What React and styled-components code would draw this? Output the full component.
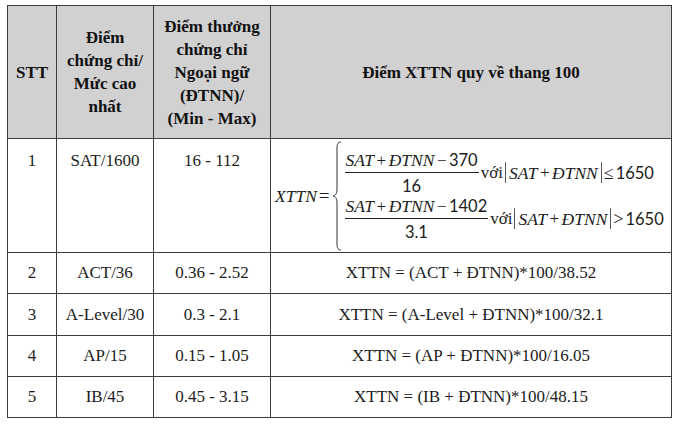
import React from "react";
import styled, { createGlobalStyle } from "styled-components";

const GlobalStyle = createGlobalStyle`
  html, body { margin: 0; padding: 0; background: #fff; }
  body { font-family: "Liberation Serif", "Times New Roman", serif; color: #1c1c1c; }
`;

const Page = styled.div`
  width: 680px;
  height: 424px;
  padding: 5px 0 0 7px;
  box-sizing: border-box;
  overflow: hidden;
`;

const Table = styled.table`
  border-collapse: collapse;
  table-layout: fixed;
  width: 664px;
  font-size: 17px;
`;

const HeadRow = styled.tr`
  height: 133px;
`;

const BodyRow = styled.tr`
  height: ${(p) => p.$h || 41}px;
`;

const HeadCell = styled.th`
  background: #d1d1d1;
  border: 1px solid #3c3c3c;
  font-weight: bold;
  line-height: 23px;
  padding: 0 4px;
  text-align: center;
  vertical-align: middle;
  color: #111;
`;

const Cell = styled.td`
  border: 1px solid #3c3c3c;
  padding: ${(p) => (p.$top ? "11px 4px 0" : "0 4px")};
  text-align: center;
  vertical-align: ${(p) => (p.$top ? "top" : "middle")};
  line-height: 22px;
`;

/* ---- formula ---- */
const Formula = styled.div`
  display: inline-flex;
  align-items: center;
  font-size: 17.5px;
  line-height: 20px;
  white-space: nowrap;
  margin-right: 6px;
`;

const Var = styled.span`
  font-style: italic;
`;

const Num = styled.span`
  font-family: Lato, "Open Sans", sans-serif;
  font-size: 16.5px;
`;

const Op = styled.span`
  margin: 0 ${(p) => p.$gap || 2.5}px;
  font-size: ${(p) => p.$size || 17}px;
`;

const Cases = styled.div`
  display: flex;
  flex-direction: column;
  margin-left: 3px;
`;

const CaseLine = styled.div`
  display: flex;
  align-items: center;
`;

const Frac = styled.span`
  display: inline-flex;
  flex-direction: column;
  align-items: center;
`;

const Numer = styled.span`
  border-bottom: 1px solid #222;
  padding: 0 1px 1px;
`;

const Denom = styled.span`
  padding-top: 3px;
`;

const Word = styled.span`
  margin: 0 2px;
  font-size: 17px;
`;

const Bar = styled.span`
  display: inline-block;
  width: 0;
  height: 21px;
  border-left: 1px solid #555;
  margin: ${(p) => (p.$right ? "0 0 0 3px" : "0 3px 0 0")};
  border-radius: 3px;
`;

const Brace = () => (
  <svg width="10" height="110" viewBox="0 0 10 110">
    <path
      d="M9 1 C5 1 5 4 5 10 L5 48 C5 53 3 55 1 55 C3 55 5 57 5 62 L5 100 C5 106 5 109 9 109"
      fill="none"
      stroke="#333"
      strokeWidth="1"
    />
  </svg>
);

const SatSum = () => (
  <>
    <Var>SAT</Var>
    <Op>+</Op>
    <Var>ĐTNN</Var>
  </>
);

const Case = ({ minus, den, rel }) => (
  <CaseLine>
    <Frac>
      <Numer>
        <SatSum />
        <Op>−</Op>
        <Num>{minus}</Num>
      </Numer>
      <Denom>
        <Num>{den}</Num>
      </Denom>
    </Frac>
    <Word>với</Word>
    <Bar />
    <SatSum />
    <Bar $right />
    <Op $gap={2} $size={18}>{rel}</Op>
    <Num>1650</Num>
  </CaseLine>
);

const SatFormula = () => (
  <Formula>
    <Var>XTTN</Var>
    <Op $gap={2} $size={19}>=</Op>
    <Brace />
    <Cases>
      <Case minus="370" den="16" rel="≤" />
      <Case minus="1402" den="3.1" rel=">" />
    </Cases>
  </Formula>
);

const rows = [
  { stt: 2, cert: "ACT/36", bonus: "0.36 - 2.52", formula: "XTTN = (ACT + ĐTNN)*100/38.52", h: 41 },
  { stt: 3, cert: "A-Level/30", bonus: "0.3 - 2.1", formula: "XTTN = (A-Level + ĐTNN)*100/32.1", h: 42 },
  { stt: 4, cert: "AP/15", bonus: "0.15 - 1.05", formula: "XTTN = (AP + ĐTNN)*100/16.05", h: 41 },
  { stt: 5, cert: "IB/45", bonus: "0.45 - 3.15", formula: "XTTN = (IB + ĐTNN)*100/48.15", h: 41 },
];

export default function App() {
  return (
    <Page>
      <GlobalStyle />
      <Table>
        <colgroup>
          <col style={{ width: 49 }} />
          <col style={{ width: 97 }} />
          <col style={{ width: 117 }} />
          <col style={{ width: 401 }} />
        </colgroup>
        <thead>
          <HeadRow>
            <HeadCell>STT</HeadCell>
            <HeadCell>
              Điểm
              <br />
              chứng chỉ/
              <br />
              Mức cao
              <br />
              nhất
            </HeadCell>
            <HeadCell>
              Điểm thưởng
              <br />
              chứng chỉ
              <br />
              Ngoại ngữ
              <br />
              (ĐTNN)/
              <br />
              (Min - Max)
            </HeadCell>
            <HeadCell>Điểm XTTN quy về thang 100</HeadCell>
          </HeadRow>
        </thead>
        <tbody>
          <BodyRow $h={114}>
            <Cell $top>1</Cell>
            <Cell $top>SAT/1600</Cell>
            <Cell $top>16 - 112</Cell>
            <Cell>
              <SatFormula />
            </Cell>
          </BodyRow>
          {rows.map((r) => (
            <BodyRow key={r.stt} $h={r.h}>
              <Cell>{r.stt}</Cell>
              <Cell>{r.cert}</Cell>
              <Cell>{r.bonus}</Cell>
              <Cell>{r.formula}</Cell>
            </BodyRow>
          ))}
        </tbody>
      </Table>
    </Page>
  );
}
